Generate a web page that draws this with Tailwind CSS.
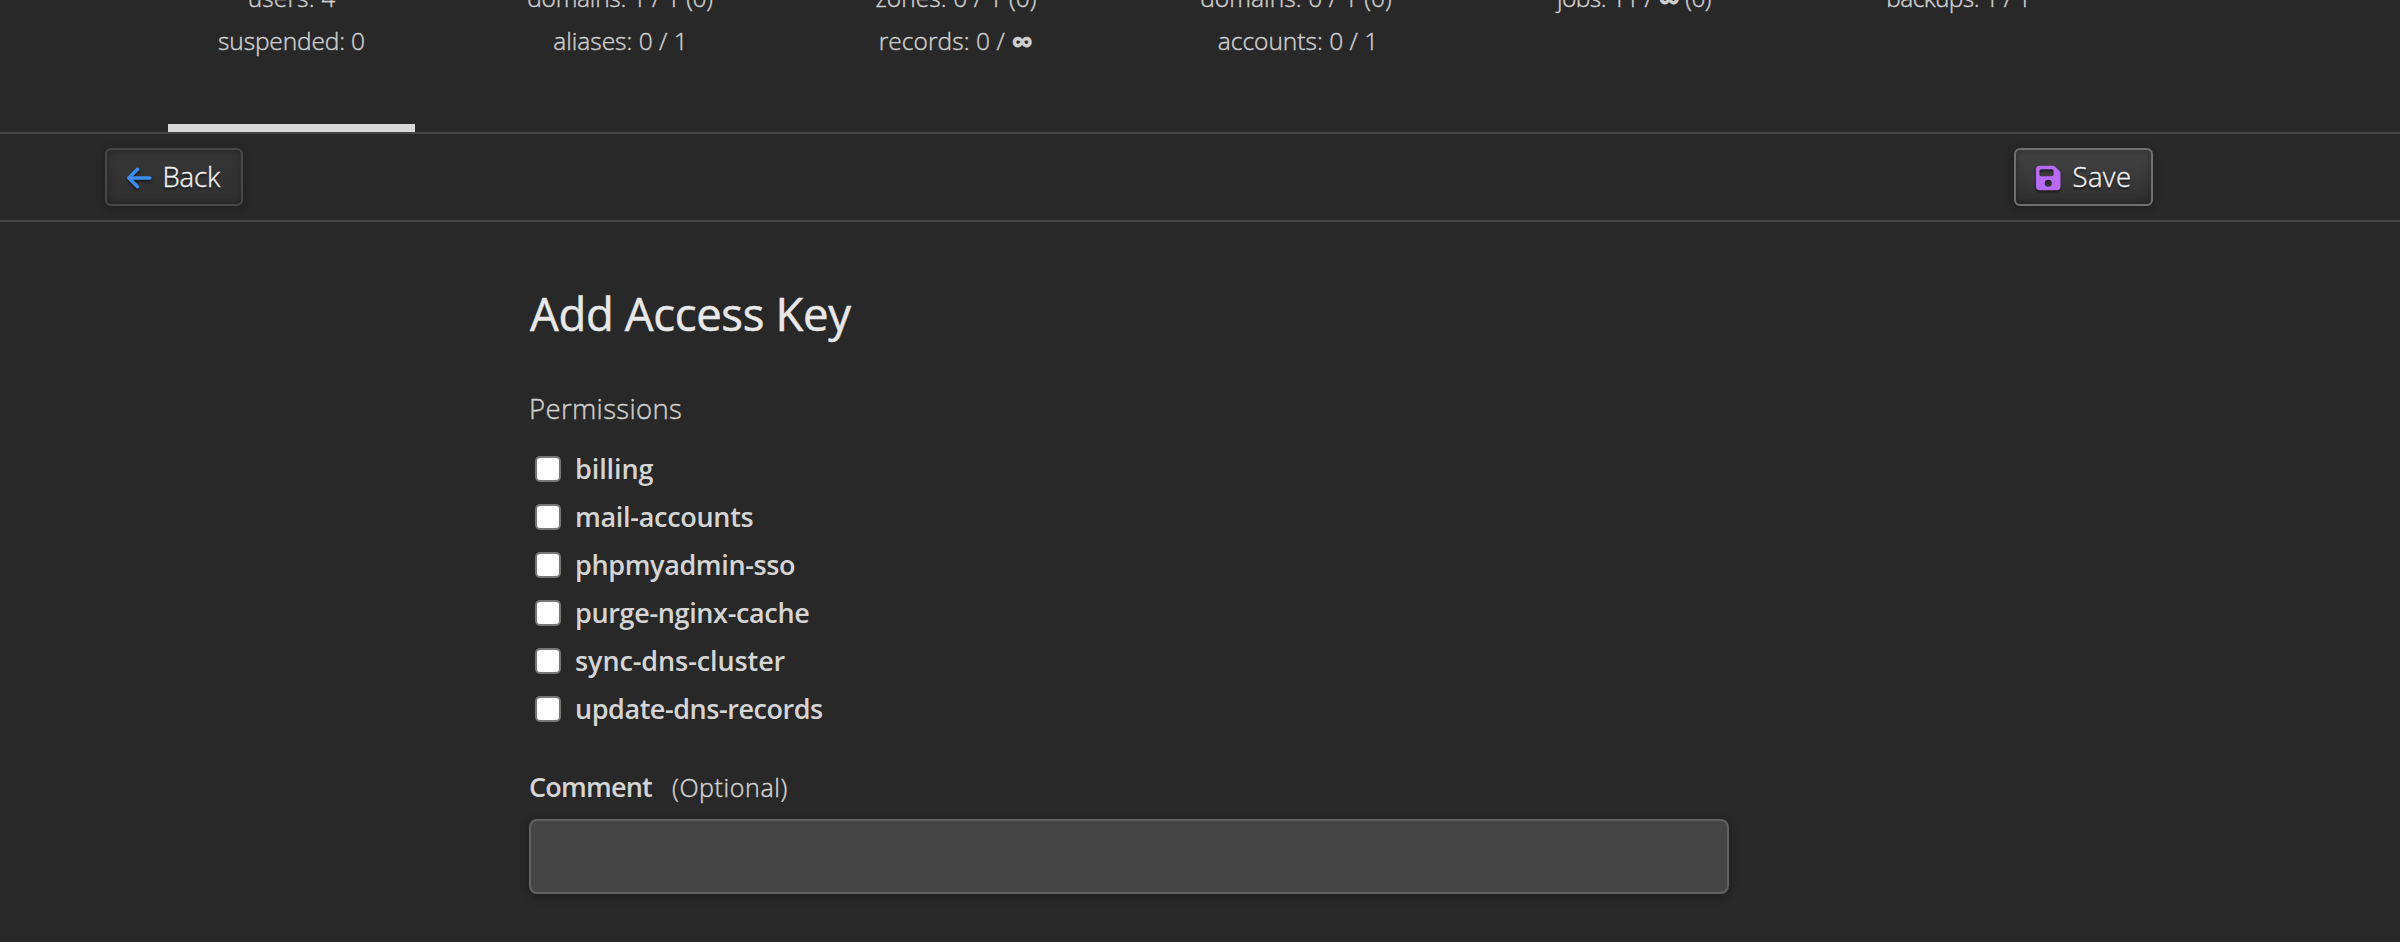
<!DOCTYPE html>
<html lang="en">
<head>
<meta charset="utf-8">
<title>Add Access Key</title>
<script src="https://cdn.jsdelivr.net/npm/@tailwindcss/browser@4"></script>
</head>
<body class="h-[942px] overflow-hidden bg-[#282828] font-['Open_Sans',sans-serif] text-[#d5d5d5]">

<!-- Stats tabs, scrolled partly out of view -->
<nav class="h-[132px] overflow-hidden pl-[168px] flex text-center text-[24.5px] leading-[43px] font-light text-[#cfcfcf] whitespace-nowrap [-webkit-text-stroke:0.4px]">
  <div class="w-[247px] h-[132px] flex flex-col justify-between">
    <ul class="-mt-[24px]"><li class="tracking-[0.15px]">users: 4</li><li class="tracking-[-0.15px]">suspended: 0</li></ul>
    <div class="h-2 bg-[#d8d8d8]"></div>
  </div>
  <ul class="w-[410px] -mt-[24px]"><li class="tracking-[-0.25px]">domains: 1 / 1 (0)</li><li class="pl-px tracking-[0px]">aliases: 0 / 1</li></ul>
  <ul class="w-[262px] -mt-[24px]"><li class="tracking-[0.08px]">zones: 0 / 1 (0)</li><li class="tracking-[0.05px]">records: 0 / <span class="font-bold text-[31px] leading-none align-[-3px]">∞</span></li></ul>
  <ul class="w-[418px] -mt-[24px]"><li class="tracking-[0.1px]">domains: 0 / 1 (0)</li><li class="pl-[4px] tracking-[0px]">accounts: 0 / 1</li></ul>
  <ul class="w-[258px] -mt-[24px]"><li class="tracking-[-0.55px]">jobs: 11 / <span class="font-bold text-[31px] leading-none align-[-3px]">∞</span> (0)</li></ul>
  <ul class="w-[389px] -mt-[24px]"><li class="pl-[2px] tracking-[-0.6px]">backups: 1 / 1</li></ul>
</nav>

<!-- Toolbar -->
<div class="h-[90px] border-y-2 border-[#444] pl-[105px] pr-[247px] flex items-center justify-between">
  <a class="w-[138px] h-[58px] pl-[20px] flex items-center gap-[11px] rounded-md border-2 border-[#484848] bg-linear-to-b from-[#363636] to-[#303030] shadow-[0_2px_8px_rgba(0,0,0,0.25),inset_0_0_8px_rgba(0,0,0,0.35)]">
    <svg class="w-[24.5px] h-[28px] mt-[2px] shrink-0 drop-shadow-[0_2px_1px_rgba(0,0,0,0.5)]" viewBox="0 0 448 512" fill="#3b8df2"><path d="M9.400 233.400c-12.500 12.500-12.500 32.800 0 45.300l160 160c12.500 12.500 32.800 12.500 45.300 0s12.500-32.800 0-45.300L109.200 288H416c17.700 0 32-14.300 32-32s-14.300-32-32-32H109.300l105.300-105.400c12.500-12.500 12.500-32.800 0-45.300s-32.800-12.500-45.300 0l-160 160z"/></svg>
    <span class="text-[27.5px] leading-[40px] pb-px font-light tracking-[-0.13px] text-[#f2f2f2] [-webkit-text-stroke:0.4px] [text-shadow:0_2px_2px_rgba(0,0,0,0.6)]">Back</span>
  </a>
  <button class="w-[139px] h-[58px] pl-[20px] flex items-center gap-[12px] rounded-md border-2 border-[#707070] bg-linear-to-b from-[#444] to-[#2f2f2f] shadow-[0_2px_8px_rgba(0,0,0,0.25),inset_0_0_8px_rgba(0,0,0,0.35)]">
    <svg class="w-[24.5px] h-[28px] mt-[2px] shrink-0 drop-shadow-[0_2px_1px_rgba(0,0,0,0.5)]" viewBox="0 0 448 512" fill="#b869f8"><path fill-rule="evenodd" d="M64 32C28.700 32 0 60.700 0 96v320c0 35.300 28.700 64 64 64h320c35.300 0 64-28.700 64-64V173.300c0-17-6.700-33.300-18.700-45.300L352 50.700C340 38.700 323.700 32 306.700 32H64zm0 96c0-17.700 14.300-32 32-32h192c17.700 0 32 14.300 32 32v64c0 17.700-14.300 32-32 32H96c-17.700 0-32-14.300-32-32v-64zM224 288a64 64 0 1 1 0 128 64 64 0 1 1 0-128z"/></svg>
    <span class="text-[27.5px] leading-[40px] pb-px font-light tracking-[0.4px] text-[#f2f2f2] [-webkit-text-stroke:0.4px] [text-shadow:0_2px_2px_rgba(0,0,0,0.6)]">Save</span>
  </button>
</div>

<!-- Form -->
<main class="ml-[529px] w-[1200px] pt-[61px]">
  <h1 class="pl-px text-[45.5px] leading-[60px] font-medium tracking-[-0.35px] text-[#e8e8e8] [-webkit-text-stroke:0.5px]">Add Access Key</h1>
  <p class="mt-[46px] text-[27.5px] leading-[40px] font-light tracking-[0.35px] text-[#cfcfcf] [-webkit-text-stroke:0.4px]">Permissions</p>
  <div class="mt-[16px] text-[27px] font-semibold">
    <label class="h-12 pl-[6px] flex items-center gap-[14px] tracking-[-0.1px]"><input type="checkbox" class="appearance-none size-[26px] rounded-[5px] border-2 border-[#767676] bg-white"><span class="leading-[40px]">billing</span></label>
    <label class="h-12 pl-[6px] flex items-center gap-[14px] tracking-[-0.3px]"><input type="checkbox" class="appearance-none size-[26px] rounded-[5px] border-2 border-[#767676] bg-white"><span class="leading-[40px]">mail-accounts</span></label>
    <label class="h-12 pl-[6px] flex items-center gap-[14px] tracking-[-0.37px]"><input type="checkbox" class="appearance-none size-[26px] rounded-[5px] border-2 border-[#767676] bg-white"><span class="leading-[40px]">phpmyadmin-sso</span></label>
    <label class="h-12 pl-[6px] flex items-center gap-[14px] tracking-[-0.35px]"><input type="checkbox" class="appearance-none size-[26px] rounded-[5px] border-2 border-[#767676] bg-white"><span class="leading-[40px]">purge-nginx-cache</span></label>
    <label class="h-12 pl-[6px] flex items-center gap-[14px] tracking-[-0.1px]"><input type="checkbox" class="appearance-none size-[26px] rounded-[5px] border-2 border-[#767676] bg-white"><span class="leading-[40px]">sync-dns-cluster</span></label>
    <label class="h-12 pl-[6px] flex items-center gap-[14px] tracking-[-0.45px]"><input type="checkbox" class="appearance-none size-[26px] rounded-[5px] border-2 border-[#767676] bg-white"><span class="leading-[40px]">update-dns-records</span></label>
  </div>
  <label for="comment" class="mt-[34px] h-[40px] flex items-baseline leading-[40px]"><span class="w-[143px] text-[27px] font-semibold tracking-[-0.8px]">Comment</span><span class="text-[25px] font-light tracking-[0.6px] [-webkit-text-stroke:0.4px]">(Optional)</span></label>
  <input id="comment" type="text" class="block mt-[12px] w-[1200px] h-[75px] rounded-lg border-2 border-[#616161] bg-[#454545] shadow-[0_2px_10px_rgba(0,0,0,0.3)]">
</main>
</body>
</html>
